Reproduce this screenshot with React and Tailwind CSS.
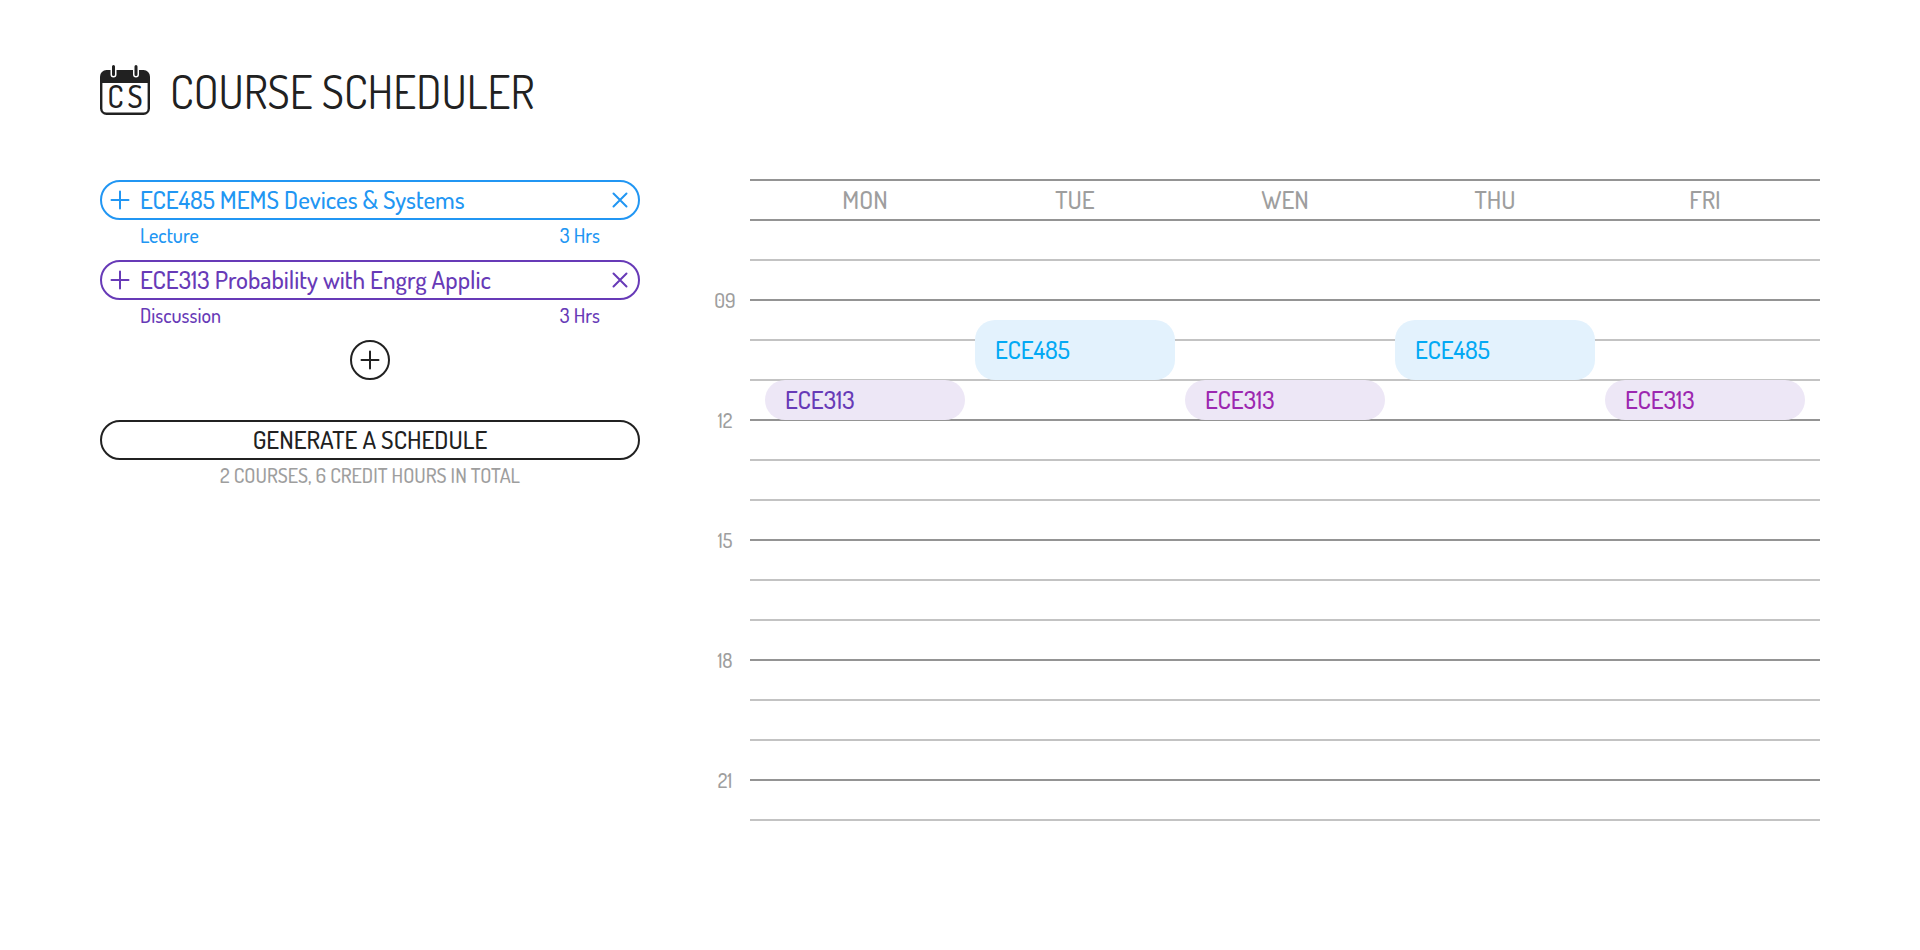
import React from "react";

const COURSES = [
  { title: "ECE485 MEMS Devices & Systems", kind: "Lecture", hours: "3 Hrs", tone: "text-[#2196f3]" },
  { title: "ECE313 Probability with Engrg Applic", kind: "Discussion", hours: "3 Hrs", tone: "text-[#673ab7]" },
];

const DAYS = ["MON", "TUE", "WEN", "THU", "FRI"];
const HOURS = [7, 8, 9, 10, 11, 12, 13, 14, 15, 16, 17, 18, 19, 20, 21, 22];
const ROW_HEIGHT = 40;

const BLUE = "bg-[#e3f2fd] text-[#03a9f4]";
const VIOLET = "bg-[#ede7f6] text-[#673ab7]";
const PURPLE = "bg-[#ede7f6] text-[#9c27b0]";

const EVENTS = [
  { day: "MON", name: "ECE313", start: 11, length: 1, tone: VIOLET },
  { day: "TUE", name: "ECE485", start: 9.5, length: 1.5, tone: BLUE },
  { day: "WEN", name: "ECE313", start: 11, length: 1, tone: PURPLE },
  { day: "THU", name: "ECE485", start: 9.5, length: 1.5, tone: BLUE },
  { day: "FRI", name: "ECE313", start: 11, length: 1, tone: PURPLE },
];

function Logo() {
  return (
    <svg viewBox="0 0 50 50" className="size-[50px] shrink-0" aria-hidden="true">
      <rect x="0" y="5" width="50" height="45" rx="6.5" fill="#212121" />
      <path d="M2.4 18H47.6V43.5A4 4 0 0 1 43.6 47.5H6.4A4 4 0 0 1 2.4 43.5Z" fill="#fff" />
      <path d="M13.5 0V9.5M36 0V9.5" stroke="#fff" strokeWidth="6" strokeLinecap="round" />
      <path d="M13.5 1.5V9.5M36 1.5V9.5" stroke="#212121" strokeWidth="3" strokeLinecap="round" />
      <text x="15.5" y="43" textAnchor="middle" fontSize="30" fontWeight="500" fill="#212121">C</text>
      <text x="35" y="43" textAnchor="middle" fontSize="30" fontWeight="500" fill="#212121">S</text>
    </svg>
  );
}

function Plus() {
  return (
    <svg viewBox="0 0 20 20" className="size-5" fill="none" stroke="currentColor" strokeWidth="2" strokeLinecap="round" aria-hidden="true">
      <path d="M10 1.5V18.5M1.5 10H18.5" />
    </svg>
  );
}

function Cross() {
  return (
    <svg viewBox="0 0 20 20" className="size-5" fill="none" stroke="currentColor" strokeWidth="2" strokeLinecap="round" aria-hidden="true">
      <path d="M3.5 3.5L16.5 16.5M16.5 3.5L3.5 16.5" />
    </svg>
  );
}

function Course({ course }) {
  return (
    <li className={course.tone}>
      <div className="flex h-10 items-center rounded-full border-2 border-current px-2">
        <button type="button" aria-label="Show sections" className="cursor-pointer">
          <Plus />
        </button>
        <h2 className="min-w-0 flex-1 truncate px-[10px] pb-0.5 text-[25px] leading-8">{course.title}</h2>
        <button type="button" aria-label="Remove course" className="cursor-pointer">
          <Cross />
        </button>
      </div>
      <div className="flex h-10 justify-between px-10 pt-[3px] text-[20px] leading-6">
        <span>{course.kind}</span>
        <span>{course.hours}</span>
      </div>
    </li>
  );
}

function Schedule() {
  return (
    <table className="w-full table-fixed border-separate border-spacing-0 text-[25px] font-medium text-[#9e9e9e]">
      <thead>
        <tr className="h-10">
          <td className="w-[50px] p-0" />
          <td className="w-[10px] border-t-2 border-[#949494] p-0" />
          {DAYS.map((day) => (
            <th key={day} scope="col" className="border-t-2 border-[#949494] p-0 pb-0.5 leading-8 font-medium">
              {day}
            </th>
          ))}
          <td className="w-[10px] border-t-2 border-[#949494] p-0" />
        </tr>
      </thead>
      <tbody>
        {HOURS.map((hour) => {
          const major = hour % 3 === 0;
          const line = major || hour === 7 ? "border-t-2 border-[#949494]" : "border-t-2 border-[#c3c3c3]";
          return (
            <tr key={hour} className="h-10">
              <th scope="row" className="relative p-0 font-medium">
                {major && (
                  <span className="absolute -top-[13px] left-0 w-[50px] text-center text-[20px] leading-7 slashed-zero">
                    {String(hour).padStart(2, "0")}
                  </span>
                )}
              </th>
              <td className={`p-0 ${line}`} />
              {DAYS.map((day) => {
                const event = EVENTS.find((e) => e.day === day && Math.floor(e.start) === hour);
                return (
                  <td key={day} className={`relative p-0 ${line}`}>
                    {event && (
                      <div
                        className={`absolute inset-x-[5px] z-10 flex items-center rounded-[20px] px-5 ${event.tone}`}
                        style={{
                          top: (event.start - hour) * ROW_HEIGHT - 1,
                          height: event.length * ROW_HEIGHT,
                        }}
                      >
                        {event.name}
                      </div>
                    )}
                  </td>
                );
              })}
              <td className={`p-0 ${line}`} />
            </tr>
          );
        })}
      </tbody>
    </table>
  );
}

export default function App() {
  return (
    <div className="min-h-screen bg-white px-[100px] pt-16 pb-20 font-['Dosis','Roboto_Condensed','Roboto',sans-serif] font-medium text-[#212121]">
      <header className="flex h-[52px] items-center gap-5">
        <Logo />
        <h1 className="pt-1 text-[45px] leading-[52px] font-normal">COURSE SCHEDULER</h1>
      </header>
      <main className="mt-[63px] flex items-start">
        <section className="w-[540px] shrink-0 pt-px" aria-label="Courses">
          <ul>
            {COURSES.map((course) => (
              <Course key={course.title} course={course} />
            ))}
          </ul>
          <div className="flex justify-center">
            <button
              type="button"
              aria-label="Add a course"
              className="flex size-10 cursor-pointer items-center justify-center rounded-full border-2 border-[#212121]"
            >
              <Plus />
            </button>
          </div>
          <button
            type="button"
            className="mt-10 h-10 w-full cursor-pointer rounded-full border-2 border-[#212121] pb-0.5 text-[25px] leading-8"
          >
            GENERATE A SCHEDULE
          </button>
          <p className="pt-[3px] text-center text-[20px] leading-6 text-[#9e9e9e]">2 COURSES, 6 CREDIT HOURS IN TOTAL</p>
        </section>
        <section className="ml-[60px] min-w-0 flex-1" aria-label="Weekly schedule">
          <Schedule />
        </section>
      </main>
    </div>
  );
}
